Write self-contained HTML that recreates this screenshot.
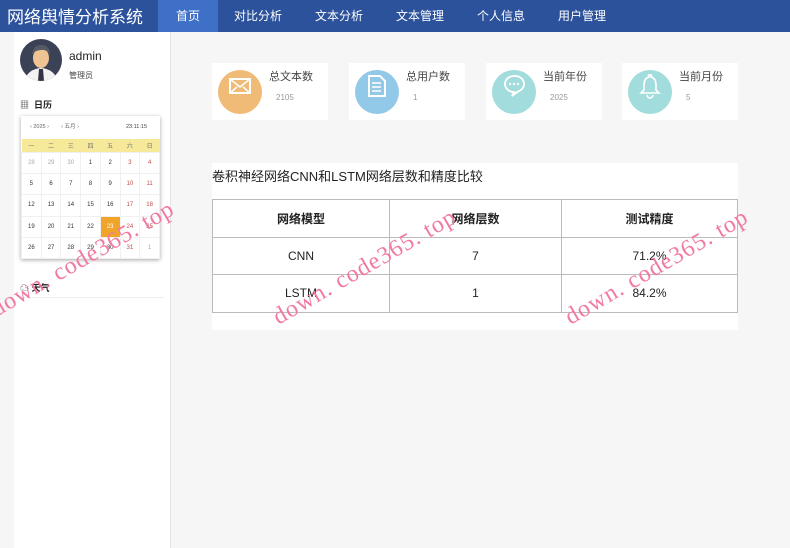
<!DOCTYPE html><html><head><meta charset="utf-8"><style>
*{margin:0;padding:0;box-sizing:border-box}
body{width:790px;height:548px;overflow:hidden;background:#f6f6f6;font-family:"Liberation Sans","Noto Sans CJK SC",sans-serif;position:relative}
.nav{position:absolute;left:0;top:0;width:790px;height:32px;background:#2c529c}
.brand{position:absolute;left:7px;top:3px;color:#fff;font-size:17px}
.ni{position:absolute;top:0;height:32px;line-height:32px;color:#fff;font-size:12px;text-align:center;width:60px}
.side{position:absolute;left:14px;top:32px;width:157px;height:516px;background:#fff;border-right:1px solid #e4e4e4}
.card{position:absolute;top:63px;width:116px;height:57px;background:#fff}
.circ{position:absolute;left:6px;top:7px;width:44px;height:44px;border-radius:50%}
.ct{position:absolute;left:57px;top:5px;font-size:11px;color:#444}
.cv{position:absolute;left:64px;top:30px;font-size:8px;color:#999}
.cal{position:absolute;left:21px;top:116px;width:139px;height:143px;background:#fff;box-shadow:0 1px 4px rgba(0,0,0,.35);font-size:6px;color:#333}
.cal table{border-collapse:collapse;position:absolute;top:23px;left:0;width:139px}
.cal td{width:19.8px;height:21.4px;text-align:center;border:1px solid #f0f0f0}
.cal tr.w td{height:13px;background:#f7e99a;color:#777;border:none}
.r{color:#c0504d}.g{color:#aaa}
.panel{position:absolute;left:212px;top:163px;width:526px;height:167px;background:#fff}
.tb{position:absolute;left:0;top:36px;width:526px;border-collapse:collapse}
.tb td{border:1px solid #bbb;text-align:center;font-size:12px;color:#222;height:37.5px}
.wm{position:absolute;color:#f07aa0;font-family:"Liberation Serif",serif;font-size:24px;transform:rotate(-30deg);transform-origin:left bottom;white-space:nowrap;letter-spacing:1px}
</style></head><body>
<div class="nav"><div class="brand">网络舆情分析系统</div>
<div class="ni" style="left:158px;background:#3e70c8">首页</div>
<div class="ni" style="left:228px">对比分析</div>
<div class="ni" style="left:309px">文本分析</div>
<div class="ni" style="left:390px">文本管理</div>
<div class="ni" style="left:471px">个人信息</div>
<div class="ni" style="left:552px">用户管理</div></div>
<div class="side"></div>
<svg style="position:absolute;left:20px;top:39px" width="42" height="42"><defs><clipPath id="c"><circle cx="21" cy="21" r="21"/></clipPath></defs><g clip-path="url(#c)"><rect width="42" height="42" fill="#3c4255"/><path d="M4 42 Q8 30 21 29 Q34 30 38 42Z" fill="#f2f2f2"/><path d="M19 30h4l1 12h-6z" fill="#334"/><ellipse cx="21" cy="19" rx="8" ry="10" fill="#f0c392"/><path d="M12 16 Q13 6 21 6 Q30 6 30 16 Q27 10 21 11 Q15 11 12 16Z" fill="#555a66"/></g></svg>
<div style="position:absolute;left:69px;top:49px;font-size:12px;color:#222">admin</div>
<div style="position:absolute;left:69px;top:70px;font-size:8px;color:#444">管理员</div>
<div style="position:absolute;left:20px;top:98px;font-size:9px;font-weight:bold;color:#222"><span style="color:#555">▦</span>&nbsp; 日历</div>
<div class="cal"><div style="position:absolute;top:6px;left:9px;font-size:5.5px;color:#666">‹ 2025 ›&nbsp;&nbsp;&nbsp;&nbsp;&nbsp;&nbsp;&nbsp;&nbsp;‹ 五月 ›</div><div style="position:absolute;top:8px;left:105px;font-size:5.5px;color:#444">23:11:15</div>
<table><tr class="w"><td>一</td><td>二</td><td>三</td><td>四</td><td>五</td><td>六</td><td>日</td></tr>
<tr><td class="g">28</td><td class="g">29</td><td class="g">30</td><td>1</td><td>2</td><td class="r">3</td><td class="r">4</td></tr>
<tr><td>5</td><td>6</td><td>7</td><td>8</td><td>9</td><td class="r">10</td><td class="r">11</td></tr>
<tr><td>12</td><td>13</td><td>14</td><td>15</td><td>16</td><td class="r">17</td><td class="r">18</td></tr>
<tr><td>19</td><td>20</td><td>21</td><td>22</td><td style="background:#f0a52a;color:#fff">23</td><td class="r">24</td><td class="r">25</td></tr>
<tr><td>26</td><td>27</td><td>28</td><td>29</td><td>30</td><td class="r">31</td><td class="g">1</td></tr></table></div>
<div style="position:absolute;left:20px;top:281px;font-size:9px;font-weight:bold;color:#222">☁ 天气</div>
<div style="position:absolute;left:20px;top:297px;width:144px;border-top:1px solid #eee"></div>
<div class="card" style="left:212px"><div class="circ" style="background:#efbb77"></div><svg style="position:absolute;left:17px;top:15px" width="22" height="16"><rect x="1" y="1" width="20" height="14" fill="none" stroke="#fff" stroke-width="2"/><path d="M1 1l10 8 10-8M1 15l7-6M21 15l-7-6" fill="none" stroke="#fff" stroke-width="1.5"/></svg><div class="ct">总文本数</div><div class="cv">2105</div></div>
<div class="card" style="left:349px"><div class="circ" style="background:#92c8e8"></div><svg style="position:absolute;left:19px;top:12px" width="18" height="22"><path d="M1 1h11l5 5v15H1z" fill="none" stroke="#fff" stroke-width="2"/><path d="M4 8h9M4 12h9M4 16h9" stroke="#fff" stroke-width="1.5"/></svg><div class="ct">总用户数</div><div class="cv">1</div></div>
<div class="card" style="left:486px"><div class="circ" style="background:#a3dcdc"></div><svg style="position:absolute;left:17px;top:11px" width="22" height="24"><path d="M11 2a9 8 0 1 0 0 16l-2 4 6-4.5A9 8 0 0 0 11 2z" fill="none" stroke="#fff" stroke-width="1.8"/><circle cx="7" cy="10" r="1.2" fill="#fff"/><circle cx="11" cy="10" r="1.2" fill="#fff"/><circle cx="15" cy="10" r="1.2" fill="#fff"/></svg><div class="ct">当前年份</div><div class="cv">2025</div></div>
<div class="card" style="left:622px"><div class="circ" style="background:#a3dcdc"></div><svg style="position:absolute;left:17px;top:10px" width="22" height="26"><path d="M11 2a1 1 0 0 1 1 2c4 1 5 4 5 8v5l3 3H2l3-3v-5c0-4 1-7 5-8a1 1 0 0 1 1-2z" fill="none" stroke="#fff" stroke-width="1.6"/><path d="M8 22a3 3 0 0 0 6 0" fill="none" stroke="#fff" stroke-width="1.5"/></svg><div class="ct">当前月份</div><div class="cv">5</div></div>
<div class="panel"><div style="position:absolute;left:0;top:3px;font-size:13px;color:#222">卷积神经网络CNN和LSTM网络层数和精度比较</div>
<table class="tb"><tr><td style="width:177px;font-weight:bold">网络模型</td><td style="width:172px;font-weight:bold">网络层数</td><td style="font-weight:bold">测试精度</td></tr><tr><td>CNN</td><td>7</td><td>71.2%</td></tr><tr><td>LSTM</td><td>1</td><td>84.2%</td></tr></table></div>
<div class="wm" style="left:0px;top:296px">down. code365. top</div>
<div class="wm" style="left:282px;top:304px">down. code365. top</div>
<div class="wm" style="left:574px;top:304px">down. code365. top</div>
</body></html>
